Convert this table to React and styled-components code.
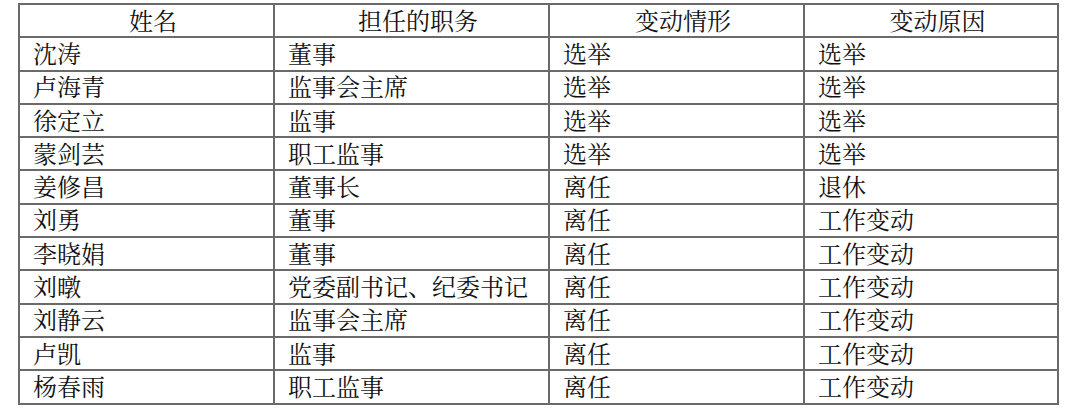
import React from "react";
import styled, { createGlobalStyle } from "styled-components";

const GlobalStyle = createGlobalStyle`
  body {
    margin: 0;
    background: #ffffff;
    font-family: "Noto Serif CJK SC", "Noto Sans CJK SC", "Liberation Serif", serif;
  }
`;

const Page = styled.div`
  padding: 3px 0 0 18px;
`;

const Table = styled.table`
  border-collapse: collapse;
  width: 1039px;
  table-layout: fixed;
  color: #111;
  font-size: 24px;
  line-height: 1;
`;

const Cell = styled.td`
  border: 2px solid #6a6a6a;
  height: 29.3px;
  padding: 0 0 2px 13px;
  text-align: ${(p) => (p.$head ? "center" : "left")};
  font-weight: 400;
  white-space: nowrap;
  vertical-align: middle;
`;

const widths = [255, 275, 255, 254];

const head = ["姓名", "担任的职务", "变动情形", "变动原因"];

const rows = [
  ["沈涛", "董事", "选举", "选举"],
  ["卢海青", "监事会主席", "选举", "选举"],
  ["徐定立", "监事", "选举", "选举"],
  ["蒙剑芸", "职工监事", "选举", "选举"],
  ["姜修昌", "董事长", "离任", "退休"],
  ["刘勇", "董事", "离任", "工作变动"],
  ["李晓娟", "董事", "离任", "工作变动"],
  ["刘暾", "党委副书记、纪委书记", "离任", "工作变动"],
  ["刘静云", "监事会主席", "离任", "工作变动"],
  ["卢凯", "监事", "离任", "工作变动"],
  ["杨春雨", "职工监事", "离任", "工作变动"],
];

export default function App() {
  return (
    <Page>
      <GlobalStyle />
      <Table>
        <colgroup>
          {widths.map((w, i) => (
            <col key={i} style={{ width: w }} />
          ))}
        </colgroup>
        <thead>
          <tr>
            {head.map((h) => (
              <Cell as="th" $head key={h}>
                {h}
              </Cell>
            ))}
          </tr>
        </thead>
        <tbody>
          {rows.map((r, i) => (
            <tr key={i}>
              {r.map((c, j) => (
                <Cell key={j}>{c}</Cell>
              ))}
            </tr>
          ))}
        </tbody>
      </Table>
    </Page>
  );
}
